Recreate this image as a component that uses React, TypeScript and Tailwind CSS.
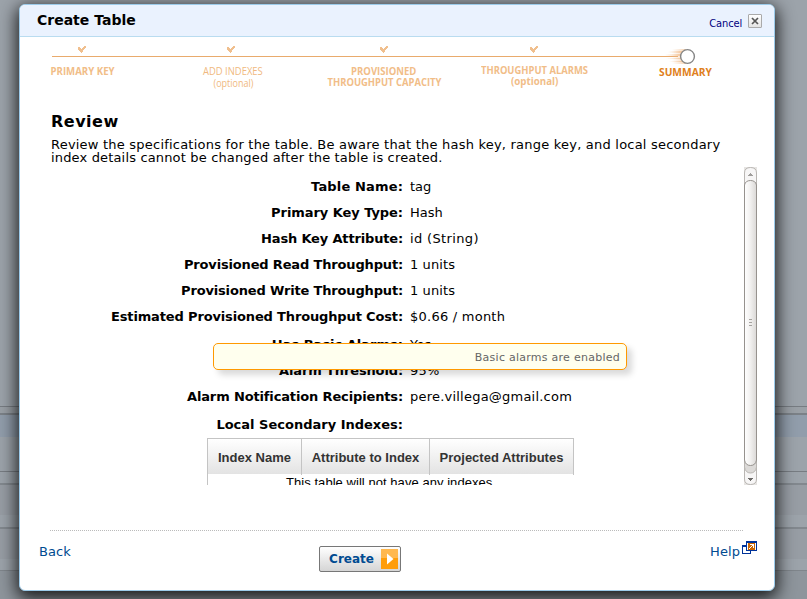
import React from "react";

const bands: string[] = [
  "h-[406px] bg-[#9ca3aa]",
  "h-px bg-[#777c82]",
  "h-[6px] bg-[#9aa0a6]",
  "h-[2px] bg-[#7b8187]",
  "h-[22px] bg-[#919dab]",
  "h-[34px] bg-[#9ca3aa]",
  "h-px bg-[#777c82]",
  "h-[11px] bg-[#9ca3aa]",
  "h-[2px] bg-[#82888e]",
  "h-[30px] bg-[#979da4]",
  "h-[12px] bg-[#9ca3aa]",
  "h-[2px] bg-[#82888e]",
  "h-[30px] bg-[#979da4]",
  "h-[11px] bg-[#9ca3aa]",
  "h-px bg-[#7f858b]",
  "h-[28px] bg-[#8e959c]",
];

const rows: { label: string; value: string; h: string; lt: string; vt: string }[] = [
  { label: "Table Name:", value: "tag", h: "h-[26px]", lt: "tracking-[0.15px]", vt: "" },
  { label: "Primary Key Type:", value: "Hash", h: "h-[26px]", lt: "tracking-[-0.06px]", vt: "" },
  { label: "Hash Key Attribute:", value: "id (String)", h: "h-[26px]", lt: "tracking-[-0.16px]", vt: "tracking-[0.36px]" },
  { label: "Provisioned Read Throughput:", value: "1 units", h: "h-[26px]", lt: "tracking-[-0.16px]", vt: "tracking-[0.1px]" },
  { label: "Provisioned Write Throughput:", value: "1 units", h: "h-[26px]", lt: "tracking-[-0.16px]", vt: "tracking-[0.1px]" },
  { label: "Estimated Provisioned Throughput Cost:", value: "$0.66 / month", h: "h-[28px]", lt: "tracking-[-0.145px]", vt: "tracking-[0.24px]" },
  { label: "Has Basic Alarms:", value: "Yes", h: "h-[26px]", lt: "", vt: "tracking-[0.2px]" },
  { label: "Alarm Threshold:", value: "95%", h: "h-[26px]", lt: "tracking-[-0.13px]", vt: "tracking-[0.2px]" },
  { label: "Alarm Notification Recipients:", value: "pere.villega@gmail.com", h: "h-[28px]", lt: "tracking-[-0.14px]", vt: "tracking-[0.22px]" },
  { label: "Local Secondary Indexes:", value: "", h: "h-[20px]", lt: "", vt: "" },
];

function Check() {
  return (
    <svg width="8" height="8" viewBox="0 0 8 8" className="block">
      <path d="M0 1h2v1h1v1h1V2h1V1h1V0h2v2H7v1H6v1H5v2H4v1H3V6H2V5H1V4H0z" fill="#f0bf8e" />
    </svg>
  );
}

function Fit({ width, children, className }: { width: number; children: string; className: string }) {
  const ref = React.useRef<HTMLSpanElement>(null);
  const [scale, setScale] = React.useState(1);
  React.useLayoutEffect(() => {
    if (ref.current) setScale(width / ref.current.offsetWidth);
  }, [width]);
  return (
    <span className="flex justify-center" style={{ width }}>
      <span ref={ref} className={"block shrink-0 whitespace-nowrap " + className} style={{ transform: `scaleX(${scale})` }}>
        {children}
      </span>
    </span>
  );
}

const stepFont = "font-['Open_Sans','Noto_Sans',sans-serif] text-[11px] leading-[11px]";

function Steps() {
  return (
    <div className="relative h-[60px]">
      <div className="ml-[32px] mt-[19px] h-px w-[626px] bg-[#e9ab6d]" />
      <div className="absolute left-[58px] top-[9px]"><Check /></div>
      <div className="absolute left-[207px] top-[9px]"><Check /></div>
      <div className="absolute left-[360px] top-[9px]"><Check /></div>
      <div className="absolute left-[510px] top-[9px]"><Check /></div>
      <svg className="absolute left-[643px] top-[10px]" width="36" height="18" viewBox="0 0 36 18">
        <defs>
          <linearGradient id="trail" x1="0" x2="1">
            <stop offset="0" stopColor="#f3c79b" stopOpacity="0" />
            <stop offset="1" stopColor="#efb27b" stopOpacity=".75" />
          </linearGradient>
        </defs>
        <rect x="9" y="2" width="14" height="15" fill="url(#trail)" opacity=".8" />
        <rect x="5" y="4" width="16" height="2" fill="url(#trail)" />
        <rect x="2" y="7" width="18" height="2" fill="url(#trail)" />
        <rect x="3" y="11" width="18" height="1" fill="url(#trail)" />
        <rect x="6" y="14" width="16" height="1" fill="url(#trail)" />
        <circle cx="24.5" cy="9.5" r="6.9" fill="#fff" stroke="#858585" strokeWidth="1.4" />
      </svg>
      <div className={"absolute left-[31px] top-[28px] text-[#f1bd88] " + stepFont}>
        <Fit width={64} className="font-bold">PRIMARY KEY</Fit>
      </div>
      <div className={"absolute left-[183px] top-[28px] flex flex-col items-center gap-px text-[#f0b980] " + stepFont}>
        <Fit width={60} className="font-normal">ADD INDEXES</Fit>
        <Fit width={40} className="font-normal">(optional)</Fit>
      </div>
      <div className={"absolute left-[307px] top-[28px] flex flex-col items-center text-[#f1bd88] " + stepFont}>
        <Fit width={65} className="font-bold">PROVISIONED</Fit>
        <Fit width={114} className="font-bold">THROUGHPUT CAPACITY</Fit>
      </div>
      <div className={"absolute left-[461px] top-[27px] flex flex-col items-center text-[#f1bd88] " + stepFont}>
        <Fit width={107} className="font-bold">THROUGHPUT ALARMS</Fit>
        <Fit width={47} className="font-bold">(optional)</Fit>
      </div>
      <div className={"absolute left-[639px] top-[29px] text-[#e07f20] " + stepFont}>
        <Fit width={53} className="font-bold">SUMMARY</Fit>
      </div>
    </div>
  );
}

function Scrollbar() {
  return (
    <svg width="13" height="318" viewBox="0 0 13 318" className="block shrink-0">
      <defs>
        <linearGradient id="thumb" x1="0" x2="1">
          <stop offset="0" stopColor="#ffffff" />
          <stop offset=".45" stopColor="#f3f2f1" />
          <stop offset="1" stopColor="#dad8d6" />
        </linearGradient>
      </defs>
      <rect width="13" height="318" fill="#e6e4e2" />
      <path d="M.5 18V6Q.5 .5 6.5 .5T12.500 6V18z" fill="#f7f6f6" stroke="#b9b6b3" />
      <path d="M.5 290V312Q.5 317.500 6.500 317.500T12.500 312V290z" fill="#f7f6f6" stroke="#b9b6b3" />
      <path d="M.5 290V300Q1.500 306 6.500 306T12.500 300V290z" fill="#dcdad8" stroke="#b9b6b3" />
      <path d="M.5 293V18Q1.500 13.500 6.500 13.500T12.500 18V293Q11.500 298.500 6.500 298.500T.5 293z" fill="url(#thumb)" stroke="#96928e" />
      <path d="M4 9h5V8H8V7H7V6H6v1H5v1H4z" fill="#a09e9c" />
      <path d="M4 311h5v1H8v1H7v1H6v-1H5v-1H4z" fill="#6c6a68" />
      <path d="M5 152.500h3M5 155.500h3M5 158.500h3" stroke="#a5a29f" />
    </svg>
  );
}

function IndexTable() {
  const head =
    "h-[35px] border-r border-[#c4c4c4] bg-linear-to-b from-white to-[#e3e3e3] pt-[11px] text-center text-[13px] leading-[15px] font-bold text-[#333]";
  return (
    <div className="ml-[156px] w-[367px] border-t border-l border-[#c4c4c4] font-['Liberation_Sans',Arial,sans-serif]">
      <div className="flex">
        <div className={"w-[94px] " + head}>Index Name</div>
        <div className={"w-[128px] " + head}>Attribute to Index</div>
        <div className={"w-[144px] " + head}>Projected Attributes</div>
      </div>
      <div className="flex h-px">
        <div className="w-[94px] border-r border-[#c4c4c4]" />
        <div className="w-[128px] border-r border-[#c4c4c4]" />
        <div className="w-[144px] border-r border-[#c4c4c4]" />
      </div>
      <div className="text-center text-[13px] leading-[15px] tracking-[0.05px] text-black">This table will not have any indexes.</div>
    </div>
  );
}

export default function App() {
  return (
    <div className="relative h-[599px] w-[807px] overflow-hidden bg-[#9ca3aa] font-['DejaVu_Sans',Verdana,sans-serif] text-[13px] leading-[13px] text-black">
      <div className="absolute inset-0">
        {bands.map((b, i) => (
          <div key={i} className={b} />
        ))}
      </div>

      <div className="absolute top-[4px] left-[19px] flex h-[587px] w-[756px] flex-col overflow-visible rounded-[6px] border border-[#9ccbea] bg-white shadow-[0_5px_17px_2px_rgba(0,0,0,0.85)]">
        <div className="flex h-[32px] shrink-0 items-start justify-between rounded-t-[5px] border-b border-[#b9dcf0] bg-[#eaf2fe] pl-[17px] pr-[12px]">
          <h1 className="pt-[8px] text-[14px] leading-[14px] font-bold">Create Table</h1>
          <div className="flex pt-[9px]">
            <span className="mr-[6px] pt-[3px] font-['DejaVu_Sans_Condensed','DejaVu_Sans',sans-serif] text-[11px] leading-[13px] font-normal tracking-[-0.15px] text-[#000080]">Cancel</span>
            <span className="flex h-[14px] w-[14px] items-center justify-center rounded-[1px] border border-[#aaa] bg-linear-to-b from-white to-[#e4e4e4]">
              <svg width="8" height="8" viewBox="0 0 8 8">
                <path d="M1 1l6 6M7 1L1 7" stroke="#555" strokeWidth="1.700" />
              </svg>
            </span>
          </div>
        </div>

        <Steps />

        <div className="pl-[31px]">
          <h2 className="pt-[17px] text-[16px] leading-[16px] font-bold tracking-[0.5px]">Review</h2>
          <p className="mt-[8px] w-[690px] text-[13px] leading-[13px] whitespace-nowrap">
            <span className="tracking-[0.215px]">
              Review the specifications for the table. Be aware that the hash key, range key, and local secondary
            </span>
            <br />
            <span className="tracking-[0.16px]">index details cannot be changed after the table is created.</span>
          </p>
        </div>

        <div className="mt-[3px] ml-[31px] flex h-[318px] w-[706px] shrink-0 justify-between overflow-hidden">
          <div className="w-[660px] pt-[13px]">
            {rows.map((r) => (
              <div key={r.label} className={"flex " + r.h}>
                <div className={"w-[352px] text-right font-bold whitespace-nowrap " + r.lt}>{r.label}</div>
                <div className={"ml-[7px] " + r.vt}>{r.value}</div>
              </div>
            ))}
            <IndexTable />
          </div>
          <Scrollbar />
        </div>

        <div className="mt-[45px] ml-[30px] h-px w-[693px] shrink-0 bg-[repeating-linear-gradient(90deg,#bbb_0_1px,transparent_1px_2px)]" />

        <div className="flex items-start pl-[19px] text-[#004b91]">
          <span className="w-[280px] pt-[14px] tracking-[0.1px]">Back</span>
          <button className="mt-[15px] flex h-[26px] w-[82px] items-center rounded-[2px] border border-[#777] bg-linear-to-b from-white to-[#d5d5d5] pl-[9px] font-bold leading-[13px]">
            <span className="w-[45px] pt-px text-[12px] leading-[13px]">Create</span>
            <svg width="17" height="20" viewBox="0 0 17 20" className="ml-[7px] block shrink-0">
              <rect width="17" height="20" fill="#ff9d0a" />
              <rect width="17" height="9" fill="#ffb84f" />
              <path d="M6 4.500L12.500 10L6 15.500z" fill="#fff" />
            </svg>
          </button>
          <span className="ml-[309px] w-[31px] pt-[14px] tracking-[0.1px]">Help</span>
          <svg width="15" height="13" viewBox="0 0 15 13" className="mt-[10px] ml-[1px] block shrink-0" shapeRendering="crispEdges">
            <path d="M0 4h9v9H0z" fill="#039" />
            <path d="M1 6h7v6H1z" fill="#fff" />
            <path d="M4 0h11v10H4z" fill="#039" />
            <path d="M5 2h9v7H5z" fill="#fff" />
            <path d="M6 2h7v7H6z" fill="#c60" />
            <path d="M8 3h4v4h-1V5h-1v1H9v1H8v1H7V7h1V6h1V5h1V4H8z" fill="#fff" />
          </svg>
        </div>
      </div>

      <div className="absolute top-[343px] left-[213px] h-[27px] w-[414px] rounded-[5px] border border-[#f90] bg-[#ffffee] pt-[7px] pr-[6px] text-right text-[11px] leading-[13px] tracking-[0.26px] text-[#666] shadow-[5px_5px_6px_rgba(0,0,0,0.15)]">
        Basic alarms are enabled
      </div>
    </div>
  );
}
